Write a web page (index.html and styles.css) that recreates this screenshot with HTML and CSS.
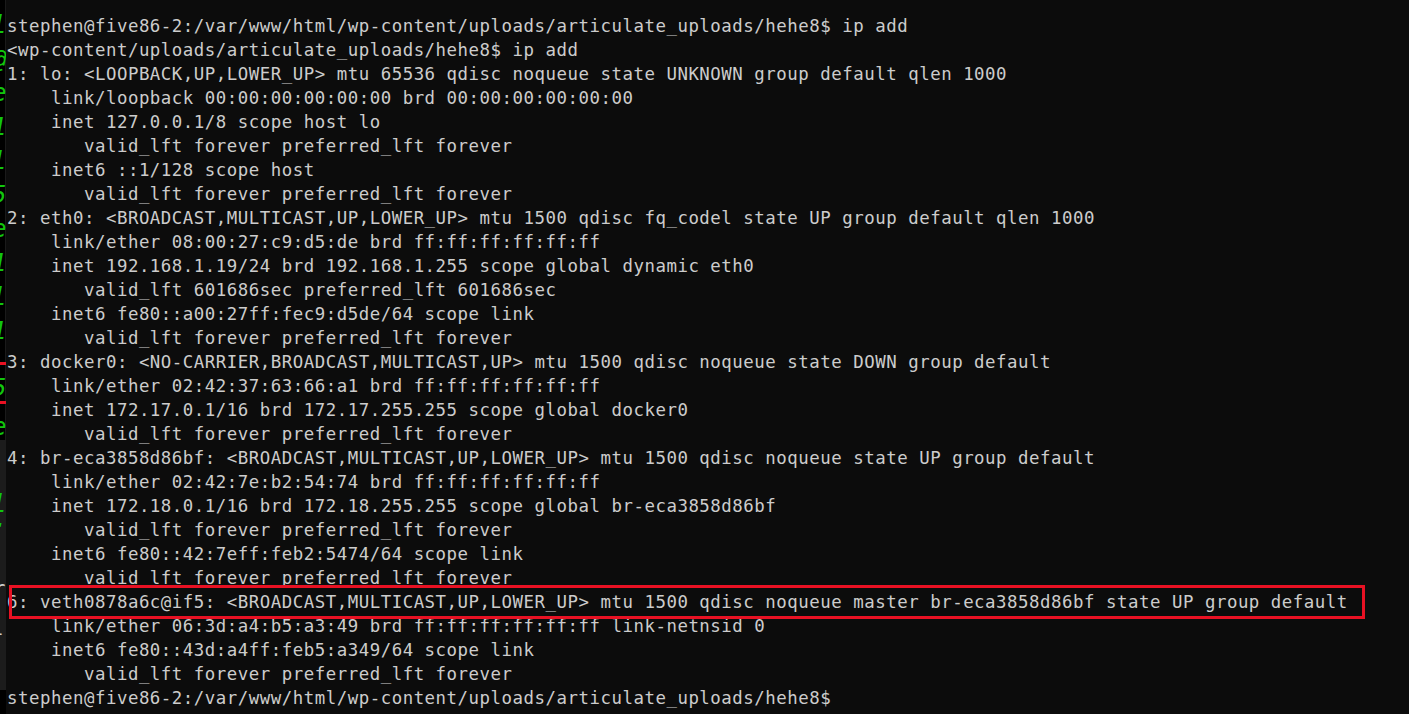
FILE: index.html
```html
<!DOCTYPE html>
<html>
<head>
<meta charset="utf-8">
<link rel="stylesheet" href="styles.css">
<title>ip add</title>
</head>
<body>
<div class="screen">
  <aside class="side">
    <div class="side-top">
      <span class="g">l</span>
      <span class="g">@</span>
      <span class="g">e</span>
      <span class="g">1</span>
      <span class="g">l</span>
      <span class="g">5</span>
      <span class="g">e</span>
      <span class="g">1</span>
      <span class="g">l</span>
      <span class="g gap">1</span>
      <span class="mark"></span>
      <span class="g g2">5</span>
      <span class="mark"></span>
      <span class="g g3">e</span>
    </div>
    <div class="side-mid">
      <span class="g gm1">l</span>
      <span class="g gm2">:</span>
      <span class="w wm1">r</span>
      <span class="w wm2">l</span>
    </div>
    <div class="side-bot"></div>
  </aside>
  <main class="term">
<div class="line">stephen@five86-2:/var/www/html/wp-content/uploads/articulate_uploads/hehe8$ ip add</div>
<div class="line">&lt;wp-content/uploads/articulate_uploads/hehe8$ ip add</div>
<div class="line">1: lo: &lt;LOOPBACK,UP,LOWER_UP&gt; mtu 65536 qdisc noqueue state UNKNOWN group default qlen 1000</div>
<div class="line">    link/loopback 00:00:00:00:00:00 brd 00:00:00:00:00:00</div>
<div class="line">    inet 127.0.0.1/8 scope host lo</div>
<div class="line">       valid_lft forever preferred_lft forever</div>
<div class="line">    inet6 ::1/128 scope host</div>
<div class="line">       valid_lft forever preferred_lft forever</div>
<div class="line">2: eth0: &lt;BROADCAST,MULTICAST,UP,LOWER_UP&gt; mtu 1500 qdisc fq_codel state UP group default qlen 1000</div>
<div class="line">    link/ether 08:00:27:c9:d5:de brd ff:ff:ff:ff:ff:ff</div>
<div class="line">    inet 192.168.1.19/24 brd 192.168.1.255 scope global dynamic eth0</div>
<div class="line">       valid_lft 601686sec preferred_lft 601686sec</div>
<div class="line">    inet6 fe80::a00:27ff:fec9:d5de/64 scope link</div>
<div class="line">       valid_lft forever preferred_lft forever</div>
<div class="line">3: docker0: &lt;NO-CARRIER,BROADCAST,MULTICAST,UP&gt; mtu 1500 qdisc noqueue state DOWN group default</div>
<div class="line">    link/ether 02:42:37:63:66:a1 brd ff:ff:ff:ff:ff:ff</div>
<div class="line">    inet 172.17.0.1/16 brd 172.17.255.255 scope global docker0</div>
<div class="line">       valid_lft forever preferred_lft forever</div>
<div class="line">4: br-eca3858d86bf: &lt;BROADCAST,MULTICAST,UP,LOWER_UP&gt; mtu 1500 qdisc noqueue state UP group default</div>
<div class="line">    link/ether 02:42:7e:b2:54:74 brd ff:ff:ff:ff:ff:ff</div>
<div class="line">    inet 172.18.0.1/16 brd 172.18.255.255 scope global br-eca3858d86bf</div>
<div class="line">       valid_lft forever preferred_lft forever</div>
<div class="line">    inet6 fe80::42:7eff:feb2:5474/64 scope link</div>
<div class="line">       valid_lft forever preferred_lft forever</div>
<div class="line"><span class="hl">6: veth0878a6c@if5: &lt;BROADCAST,MULTICAST,UP,LOWER_UP&gt; mtu 1500 qdisc noqueue master br-eca3858d86bf state UP group default</span></div>
<div class="line">    link/ether 06:3d:a4:b5:a3:49 brd ff:ff:ff:ff:ff:ff link-netnsid 0</div>
<div class="line">    inet6 fe80::43d:a4ff:feb5:a349/64 scope link</div>
<div class="line">       valid_lft forever preferred_lft forever</div>
<div class="line">stephen@five86-2:/var/www/html/wp-content/uploads/articulate_uploads/hehe8$</div>
  </main>
</div>
</body>
</html>
```

FILE: styles.css
```css
html, body {
  margin: 0;
  padding: 0;
  background: #0c0c0c;
  overflow: hidden;
}

.screen {
  display: flex;
  width: 1409px;
  height: 714px;
  background: #0c0c0c;
}

.side {
  width: 6px;
  flex: 0 0 6px;
  display: flex;
  flex-direction: column;
  overflow: hidden;
  font-family: "DejaVu Sans Mono", monospace;
  font-size: 24px;
}

.side-top {
  height: 440px;
  background: #000;
  display: flex;
  flex-direction: column;
  padding-top: 10px;
  box-sizing: border-box;
  border-right: 1px solid #1a1a1a;
}

.side-mid {
  height: 250px;
  background: #1c1c1c;
  display: flex;
  flex-direction: column;
  padding-top: 52px;
  box-sizing: border-box;
}

.side-bot {
  flex: 1;
  background: #000;
}

.g, .w {
  display: block;
  height: 34px;
  line-height: 30px;
  margin-left: -8px;
  white-space: pre;
  font-style: italic;
}

.g { color: #13c60d; }
.w { color: #d0d0d0; font-style: normal; font-size: 19px; }

.gap { height: 44px; }

.g2 { height: 22px; line-height: 22px; }
.g3 { height: 22px; line-height: 22px; }

.mark {
  display: block;
  height: 3px;
  width: 6px;
  background: #e81123;
  margin: 2px 0 12px;
}

.gm1 { height: 24px; line-height: 24px; }
.gm2 { height: 60px; line-height: 24px; }
.wm1 { height: 40px; line-height: 24px; margin-left: -6px; }
.wm2 { height: 24px; line-height: 24px; margin-left: -8px; }

.term {
  flex: 1;
  padding: 14px 0 0 1px;
  font-family: "DejaVu Sans Mono", monospace;
  font-size: 17.4px;
  letter-spacing: 0.52px;
  line-height: 24px;
  color: #cccccc;
  overflow: hidden;
}

.line {
  height: 24px;
  white-space: pre;
}

.hl {
  position: relative;
  display: inline-block;
}

.hl::after {
  content: "";
  position: absolute;
  left: 2px;
  right: -17px;
  top: -5px;
  bottom: -5px;
  border: 3px solid #e81123;
  pointer-events: none;
}
```
